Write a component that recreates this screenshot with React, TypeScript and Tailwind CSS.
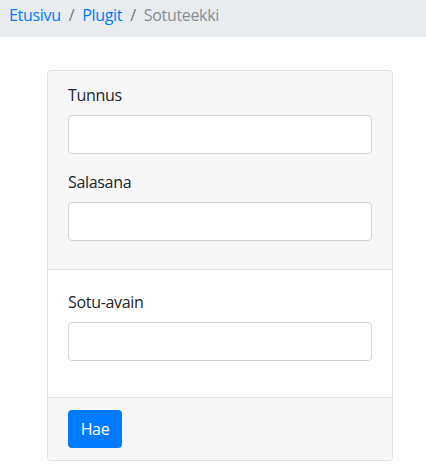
import React from "react";

const Field = ({ label, type = "text" }: { label: string; type?: string }) => (
  <div className="mb-4">
    <label className="block mb-2 leading-6 text-[#212529]">{label}</label>
    <input
      type={type}
      className="block w-full h-[39px] px-3 rounded bg-white border border-[#ced4da] text-[#495057] focus:outline-none"
    />
  </div>
);

const App = () => {
  return (
    <div
      className="min-h-[470px] bg-white text-base tracking-[-0.02em] text-[#212529]"
      style={{ fontFamily: '"Segoe UI", "Open Sans", "Noto Sans", sans-serif' }}
    >
      {/* Breadcrumb */}
      <nav className="h-[37px] flex items-start pt-[3px] px-[9px] bg-[#e9ecef] leading-6">
        <a href="#" className="text-[#007bff]">Etusivu</a>
        <span className="px-2 text-[#6c757d]">/</span>
        <a href="#" className="text-[#007bff]">Plugit</a>
        <span className="px-2 text-[#6c757d]">/</span>
        <span className="text-[#868e96]">Sotuteekki</span>
      </nav>

      {/* Card */}
      <div className="ml-[47px] mt-[33px] w-[346px] border border-[#dfdfdf] rounded overflow-hidden">
        <div className="px-5 pt-3 pb-3 bg-[#f7f7f7] border-b border-[#dfdfdf]">
          <Field label="Tunnus" />
          <Field label="Salasana" type="password" />
        </div>
        <div className="p-5 bg-white">
          <Field label="Sotu-avain" />
        </div>
        <div className="px-5 py-3 bg-[#f7f7f7] border-t border-[#dfdfdf]">
          <button className="h-[38px] w-[54px] rounded bg-[#007bff] text-white leading-6">
            Hae
          </button>
        </div>
      </div>
    </div>
  );
};

export default App;
